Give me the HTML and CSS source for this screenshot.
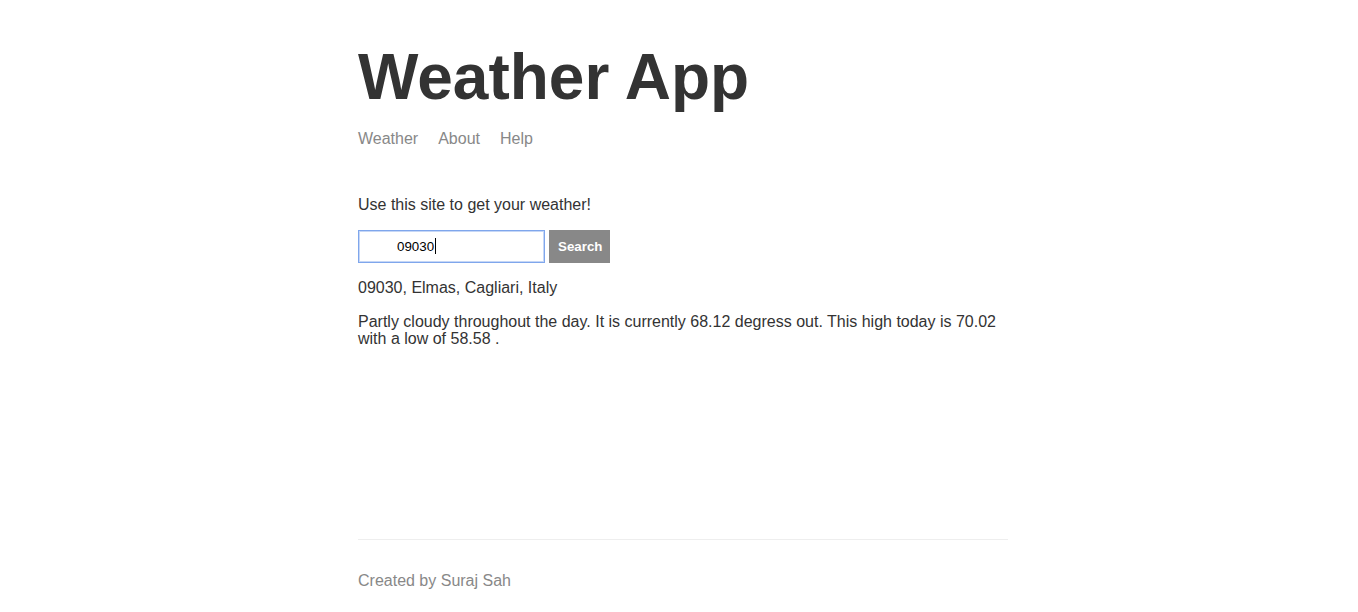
FILE: index.html
```html
<!DOCTYPE html>
<html>
<head>
<meta charset="utf-8">
<title>Weather App</title>
<link rel="stylesheet" href="styles.css">
</head>
<body>
<div class="page">
  <div class="main-content">
    <header class="header">
      <h1 class="title">Weather App</h1>
      <nav class="nav">
        <a class="nav-link" href="#">Weather</a>
        <a class="nav-link" href="#">About</a>
        <a class="nav-link" href="#">Help</a>
      </nav>
    </header>
    <p class="intro">Use this site to get your weather!</p>
    <form class="search-form">
      <span class="input-wrap">
        <input class="search-input" type="text" value="09030" placeholder="Location">
        <span class="caret"></span>
      </span>
      <button class="search-button" type="button">Search</button>
    </form>
    <p class="message">09030, Elmas, Cagliari, Italy</p>
    <p class="message">Partly cloudy throughout the day. It is currently 68.12 degress out. This high today is 70.02 with a low of 58.58 .</p>
  </div>
  <footer class="footer">
    <p class="footer-text">Created by Suraj Sah</p>
  </footer>
</div>
</body>
</html>
```
FILE: styles.css
```css
html, body {
  margin: 0;
  padding: 0;
}
body {
  color: #333333;
  font-family: "Liberation Sans", Arial, sans-serif;
  font-size: 16px;
}
.page {
  width: 650px;
  margin: 0 auto;
  padding-left: 8px;
  min-height: 603px;
  display: flex;
  flex-direction: column;
}
.main-content {
  flex-grow: 1;
}
.header {
  padding-top: 40px;
  margin-bottom: 48px;
}
.title {
  font-size: 64px;
  font-weight: bold;
  margin: 0 0 16px 0;
}
.nav {
  display: flex;
  gap: 20px;
}
.nav-link {
  color: #888888;
  text-decoration: none;
}
.intro {
  margin: 0 0 16px 0;
}
.search-form {
  display: flex;
  align-items: stretch;
  gap: 4px;
  margin: 0 0 16px 0;
}
.input-wrap {
  position: relative;
  display: block;
}
.search-input {
  display: block;
  box-sizing: border-box;
  width: 187px;
  height: 33px;
  margin: 0;
  border: 1px solid #7fa6ec;
  box-shadow: inset 0 0 0 1px #c6d7f6;
  outline: none;
  padding: 8px 8px 8px 38px;
  font-family: "Liberation Sans", Arial, sans-serif;
  font-size: 13.33px;
  color: #000000;
  background: #ffffff;
}
.caret {
  position: absolute;
  left: 77px;
  top: 8px;
  width: 1px;
  height: 16px;
  background: #000000;
}
.search-button {
  box-sizing: border-box;
  height: 33px;
  width: 61px;
  margin: 0;
  border: 1px solid #888888;
  background: #888888;
  color: #ffffff;
  padding: 8px;
  font-family: "Liberation Sans", Arial, sans-serif;
  font-size: 13.33px;
  font-weight: bold;
  cursor: pointer;
}
.message {
  margin: 0 0 17px 0;
  line-height: 17px;
}
.footer {
  color: #888888;
  border-top: 1px solid #eeeeee;
  margin-top: 15px;
  padding: 32px 0 13px 0;
}
.footer-text {
  margin: 0;
}
```
